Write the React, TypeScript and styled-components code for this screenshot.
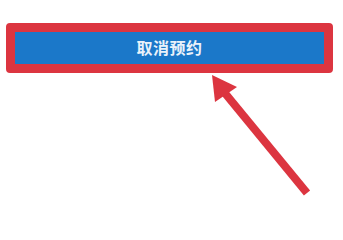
import React from 'react'
import styled, { createGlobalStyle } from 'styled-components'

const GlobalStyle = createGlobalStyle`
  html, body {
    margin: 0;
    padding: 0;
    background: #ffffff;
  }
`

const Page = styled.div`
  position: relative;
  width: 343px;
  height: 220px;
  padding: 23px 10px 0 6px;
  box-sizing: border-box;
  background: #ffffff;
  overflow: hidden;
`

const Highlight = styled.div`
  border: 9px solid #dc3540;
  border-radius: 4px;
  background: #dc3540;
`

const CancelButton = styled.button`
  display: flex;
  align-items: center;
  justify-content: center;
  width: 100%;
  height: 32px;
  padding: 0 0 3px;
  border: none;
  background: #1b78c9;
  color: #eaf2fa;
  font-family: 'Noto Sans CJK SC', 'Noto Sans', sans-serif;
  font-size: 16px;
  font-weight: 700;
  letter-spacing: 0.5px;
  cursor: pointer;
`

const ArrowOverlay = styled.svg`
  position: absolute;
  left: 0;
  top: 0;
  pointer-events: none;
`

export default function App() {
  return (
    <>
      <GlobalStyle />
      <Page>
        <Highlight>
          <CancelButton>取消预约</CancelButton>
        </Highlight>
        <ArrowOverlay width="343" height="220" viewBox="0 0 343 220">
          <line x1="224" y1="92" x2="307" y2="193" stroke="#dc3540" strokeWidth="8" />
          <polygon points="212,75 237,87 215,102" fill="#dc3540" />
        </ArrowOverlay>
      </Page>
    </>
  )
}
